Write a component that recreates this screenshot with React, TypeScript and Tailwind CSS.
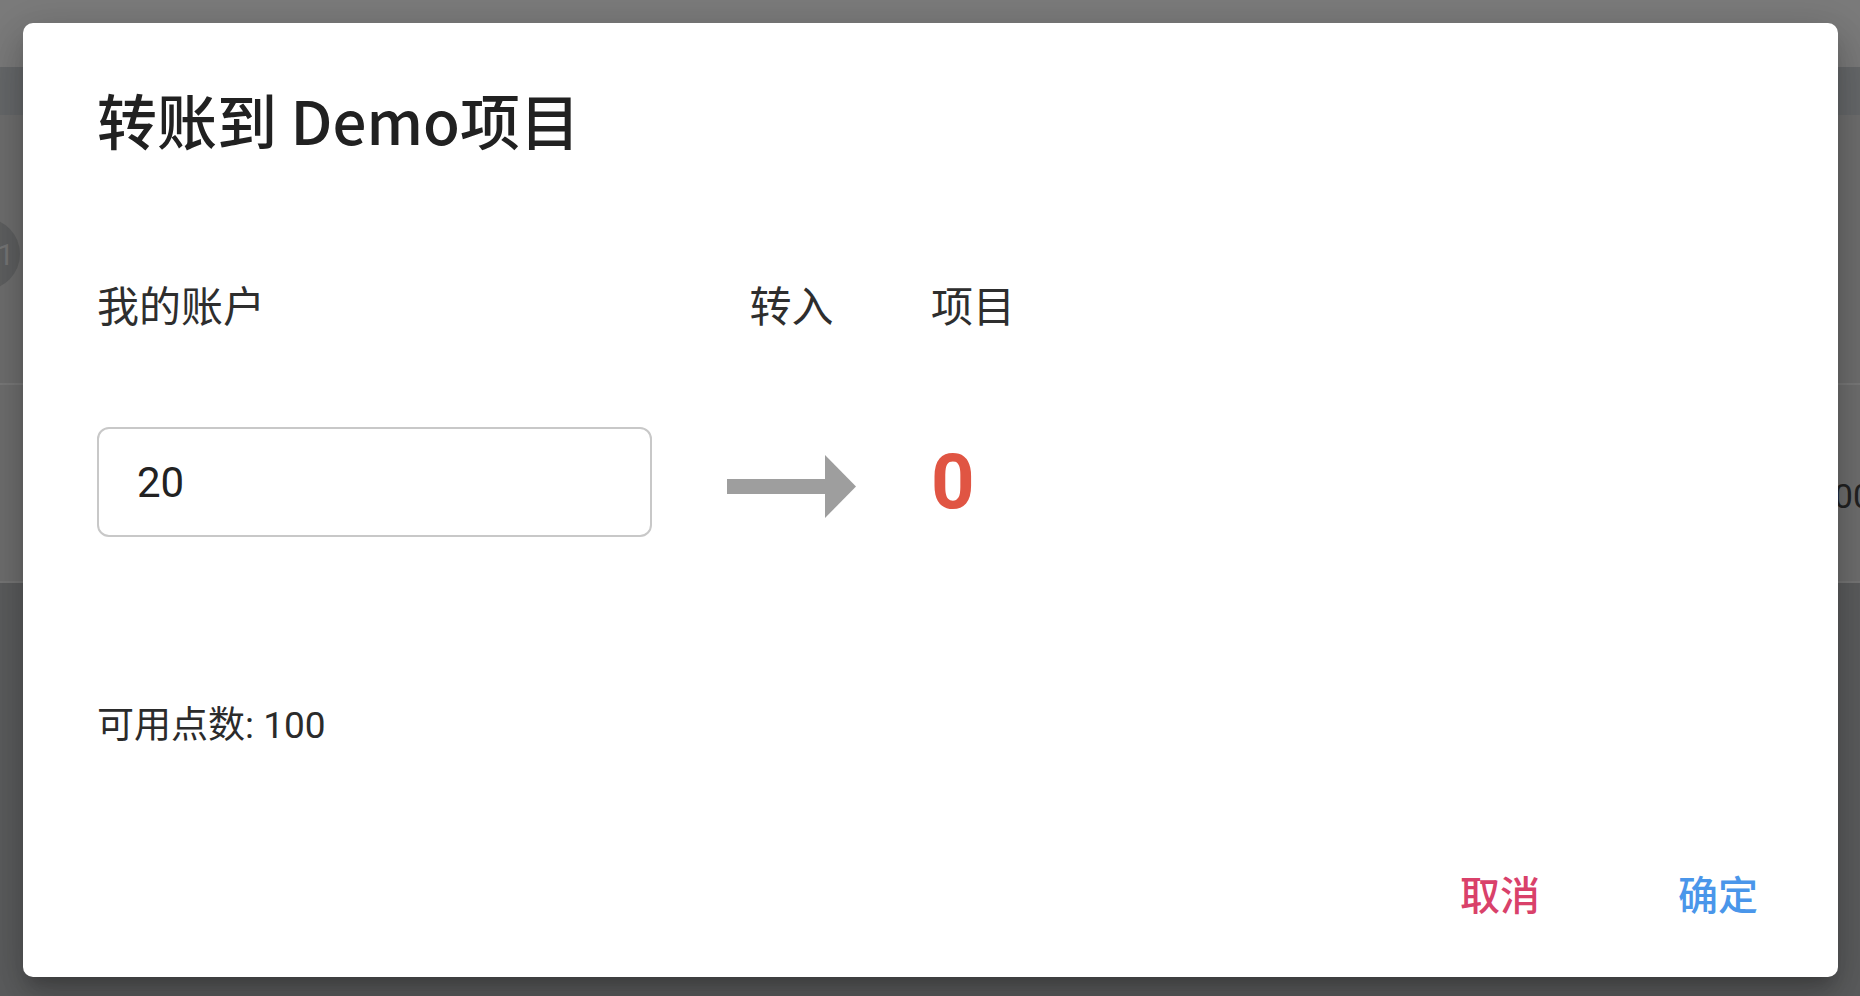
import { useState } from 'react'

function ArrowRight() {
  return (
    <svg width="129" height="63" viewBox="0 0 129 63" className="mt-[8px]">
      <rect x="0" y="24" width="99" height="15" fill="#9e9e9e" />
      <polygon points="98,0 129,31.5 98,63" fill="#9e9e9e" />
    </svg>
  )
}

export default function App() {
  const [amount, setAmount] = useState('20')
  const available = 100

  return (
    <div className="relative h-[996px] w-[1860px] overflow-hidden bg-[#5c5d5e] font-['Roboto','Noto_Sans_CJK_SC',sans-serif]">
      {/* page behind the overlay */}
      <div className="h-[67px] bg-[#7b7b7b]" />
      <div className="h-[48px] bg-[#67696b]" />
      <div className="flex h-[468px] flex-col bg-[#6f6f6f]">
        <div className="-ml-[52px] mt-[103px] flex h-[72px] w-[72px] items-center justify-end rounded-full bg-[#5f6061] pr-[6px] text-[30px] text-[#777]">
          1
        </div>
        <div className="mt-[93px] h-[2px] bg-[#7a7a7a]" />
        <div className="mt-[86px] flex justify-end text-[34px] text-[#222]">
          <span className="-mr-[12px]">100</span>
        </div>
        <div className="mt-auto h-[2px] bg-[#777]" />
      </div>

      {/* dialog */}
      <div className="absolute left-[23px] top-[23px] flex h-[954px] w-[1815px] flex-col rounded-[10px] bg-white shadow-[0_11px_15px_-7px_rgba(0,0,0,0.2),0_24px_38px_3px_rgba(0,0,0,0.14),0_9px_46px_8px_rgba(0,0,0,0.12)]">
        <h2 className="pl-[74px] pt-[60px] font-['Noto_Sans_CJK_SC',sans-serif] text-[60px] font-medium leading-[72px] text-[#212121]">
          转账到 Demo项目
        </h2>

        <div className="mt-[128px] flex pl-[74px] text-[42px] leading-[50px] text-[#2e2e2e]">
          <div className="w-[555px]">我的账户</div>
          <div className="flex w-[279px] justify-center">转入</div>
          <div>项目</div>
        </div>

        <div className="mt-[94px] flex items-center pl-[74px]">
          <input
            value={amount}
            onChange={(e) => setAmount(e.target.value)}
            className="h-[110px] w-[555px] rounded-[12px] border-2 border-[#c8c8c8] px-[38px] text-[42px] text-[#222] outline-none"
          />
          <div className="flex w-[279px] justify-center">
            <ArrowRight />
          </div>
          <div className="text-[76px] font-bold leading-[76px] text-[#e05543]">0</div>
        </div>

        <div className="mt-[166px] pl-[74px] text-[37px] leading-[46px] text-[#2b2b2b]">
          可用点数: {available}
        </div>

        <div className="mt-auto flex justify-end gap-[78px] pb-[56px] pr-[50px] text-[40px] font-medium leading-[48px]">
          <button className="px-[30px] text-[#d9416a]">取消</button>
          <button className="px-[30px] text-[#4a96ea]">确定</button>
        </div>
      </div>
    </div>
  )
}
